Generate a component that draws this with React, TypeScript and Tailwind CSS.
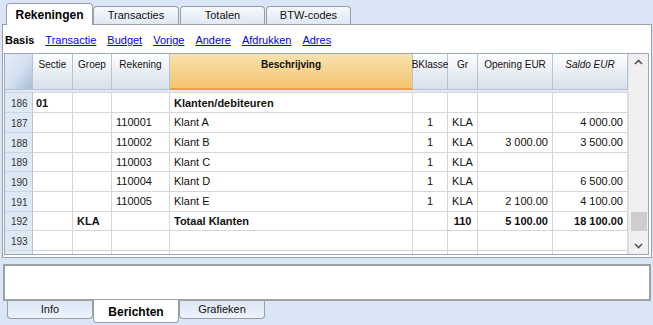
import React from "react";

const F = { fontFamily: '"Liberation Sans", Arial, sans-serif' };

type Row = {
  n: number;
  sectie?: string;
  groep?: string;
  rek?: string;
  besch?: string;
  bk?: string;
  gr?: string;
  open?: string;
  saldo?: string;
  bold?: boolean;
};

const rows: Row[] = [
  { n: 186, sectie: "01", besch: "Klanten/debiteuren", bold: true },
  { n: 187, rek: "110001", besch: "Klant A", bk: "1", gr: "KLA", saldo: "4 000.00" },
  { n: 188, rek: "110002", besch: "Klant B", bk: "1", gr: "KLA", open: "3 000.00", saldo: "3 500.00" },
  { n: 189, rek: "110003", besch: "Klant C", bk: "1", gr: "KLA" },
  { n: 190, rek: "110004", besch: "Klant D", bk: "1", gr: "KLA", saldo: "6 500.00" },
  { n: 191, rek: "110005", besch: "Klant E", bk: "1", gr: "KLA", open: "2 100.00", saldo: "4 100.00" },
  { n: 192, groep: "KLA", besch: "Totaal Klanten", gr: "110", open: "5 100.00", saldo: "18 100.00", bold: true },
  { n: 193 },
];

const cols = "grid-cols-[28px_40px_39px_58px_243px_35px_30px_75px_75px]";

function TopTab({ label, active, w }: { label: string; active?: boolean; w: string }) {
  if (active) {
    return (
      <div
        className={`${w} h-[22px] mt-[3px] -mb-px relative z-10 bg-white border border-b-0 border-[#9a9ea6] rounded-t-[4px] flex items-center justify-center text-[12px] font-bold text-black`}
      >
        {label}
      </div>
    );
  }
  return (
    <div
      className={`${w} h-[18px] mt-[6px] bg-gradient-to-b from-[#f6f9fd] to-[#dfe8f6] border border-b-0 border-[#9a9ea6] rounded-t-[4px] flex items-center justify-center text-[11px] text-[#111]`}
    >
      {label}
    </div>
  );
}

function BottomTab({ label, active, w }: { label: string; active?: boolean; w: string }) {
  if (active) {
    return (
      <div
        className={`${w} h-[23px] -mt-px relative z-10 bg-white border border-t-0 border-[#9a9ea6] rounded-b-[4px] flex items-center justify-center pt-[2px] text-[12px] font-bold text-black`}
      >
        {label}
      </div>
    );
  }
  return (
    <div
      className={`${w} h-[18px] bg-gradient-to-b from-[#dbe6f7] to-[#eef3fb] border border-t-0 border-[#9a9ea6] rounded-b-[4px] flex items-center justify-center text-[11px] text-[#111]`}
    >
      {label}
    </div>
  );
}

function HeadCell({ label, orange, italic, bold }: { label: string; orange?: boolean; italic?: boolean; bold?: boolean }) {
  return (
    <div
      className={`h-full border-r border-[#b4c3d6] flex justify-center pt-[3px] text-[10px] text-[#111] ${
        orange
          ? "bg-gradient-to-b from-[#f9e2ae] to-[#f3c46e] border-b-2 border-b-[#f0a043]"
          : "bg-gradient-to-b from-[#fdfeff] to-[#d8e0eb] border-b border-b-[#b4c3d6]"
      } ${italic ? "italic" : ""} ${bold ? "font-bold" : ""}`}
    >
      {label}
    </div>
  );
}

export default function App() {
  return (
    <div className="w-[653px] h-[325px] bg-[#dae5f8] overflow-hidden flex flex-col" style={F}>
      {/* top tabs */}
      <div className="h-[24px] flex items-start pl-[6px]">
        <TopTab label="Rekeningen" active w="w-[87px]" />
        <TopTab label="Transacties" w="w-[86px]" />
        <div className="w-[1px] shrink-0" />
        <TopTab label="Totalen" w="w-[85px]" />
        <div className="w-[1px] shrink-0" />
        <TopTab label="BTW-codes" w="w-[85px]" />
      </div>

      {/* main panel */}
      <div className="ml-[2px] w-[650px] h-[234px] bg-white border border-[#9a9ea6] flex flex-col pl-[1px] pr-[1px]">
        <div className="h-[28px] flex items-center gap-[11px] pl-[1px] pt-[2px] text-[11px]">
          <span className="font-bold text-black">Basis</span>
          <span className="text-[#0000ee] underline">Transactie</span>
          <span className="text-[#0000ee] underline">Budget</span>
          <span className="text-[#0000ee] underline">Vorige</span>
          <span className="text-[#0000ee] underline">Andere</span>
          <span className="text-[#0000ee] underline">Afdrukken</span>
          <span className="text-[#0000ee] underline">Adres</span>
        </div>

        {/* grid */}
        <div className="w-[645px] h-[202px] border border-[#9aa6b4] flex overflow-hidden">
          <div className="w-[623px] flex flex-col">
            <div className={`grid ${cols} h-[37px]`}>
              <div className="h-full bg-gradient-to-br from-[#e4ecf7] via-[#d6e2f1] to-[#a9bdd6] border-r border-b border-[#b4c3d6]" />
              <HeadCell label="Sectie" />
              <HeadCell label="Groep" />
              <HeadCell label="Rekening" />
              <HeadCell label="Beschrijving" orange bold />
              <HeadCell label="BKlasse" />
              <HeadCell label="Gr" />
              <HeadCell label="Opening EUR" />
              <HeadCell label="Saldo EUR" italic />
            </div>
            <div className={`grid ${cols} h-[2px] bg-[#e3eaf4]`}>
              <div className="bg-[#dfe8f5]" />
            </div>
            {rows.map((r) => (
              <div key={r.n} className={`grid ${cols} h-[20px] text-[11px] text-[#111] ${r.bold ? "font-bold" : ""}`}>
                <div className="bg-[#dfe8f5] border-t border-r border-t-[#c9d6e6] border-r-[#b4c3d6] flex items-center pl-[6px] pt-[2px] text-[10px] font-normal text-[#333]">
                  {r.n}
                </div>
                <div className="border-t border-r border-[#d6d6d6] flex items-center pl-[3px]">{r.sectie}</div>
                <div className="border-t border-r border-[#d6d6d6] flex items-center pl-[4px]">{r.groep}</div>
                <div className="border-t border-r border-[#d6d6d6] flex items-center pl-[4px]">{r.rek}</div>
                <div className="border-t border-r border-[#d6d6d6] flex items-center pl-[4px]">{r.besch}</div>
                <div className="border-t border-r border-[#d6d6d6] flex items-center justify-center">{r.bk}</div>
                <div className="border-t border-r border-[#d6d6d6] flex items-center justify-center">{r.gr}</div>
                <div className="border-t border-r border-[#d6d6d6] flex items-center justify-end pr-[4px]">{r.open}</div>
                <div className="border-t border-r border-[#d6d6d6] flex items-center justify-end pr-[4px]">{r.saldo}</div>
              </div>
            ))}
            <div className={`grid ${cols} h-[4px]`}>
              <div className="bg-[#dfe8f5] border-t border-r border-t-[#c9d6e6] border-r-[#b4c3d6]" />
              {Array.from({ length: 8 }).map((_, i) => (
                <div key={i} className="border-t border-r border-[#d6d6d6]" />
              ))}
            </div>
          </div>
          {/* scrollbar */}
          <div className="w-[20px] bg-[#f0f0f0] border-l border-[#e2e2e2] flex flex-col items-center">
            <svg width="9" height="6" viewBox="0 0 9 6" className="mt-[5px]">
              <path d="M1 5 L4.5 1.5 L8 5" fill="none" stroke="#555" strokeWidth="1.6" />
            </svg>
            <div className="flex-1" />
            <div className="w-[16px] h-[19px] bg-[#cdcdcd] mb-[12px]" />
            <svg width="9" height="6" viewBox="0 0 9 6" className="mb-[5px]">
              <path d="M1 1 L4.5 4.5 L8 1" fill="none" stroke="#555" strokeWidth="1.6" />
            </svg>
          </div>
        </div>
      </div>

      {/* bottom panel */}
      <div className="mt-[6px] ml-[3px] w-[648px] h-[37px] bg-white border-2 border-[#a0a0a0]" />

      {/* bottom tabs */}
      <div className="flex items-start pl-[7px]">
        <BottomTab label="Info" w="w-[86px]" />
        <BottomTab label="Berichten" active w="w-[86px]" />
        <BottomTab label="Grafieken" w="w-[86px]" />
      </div>
    </div>
  );
}
